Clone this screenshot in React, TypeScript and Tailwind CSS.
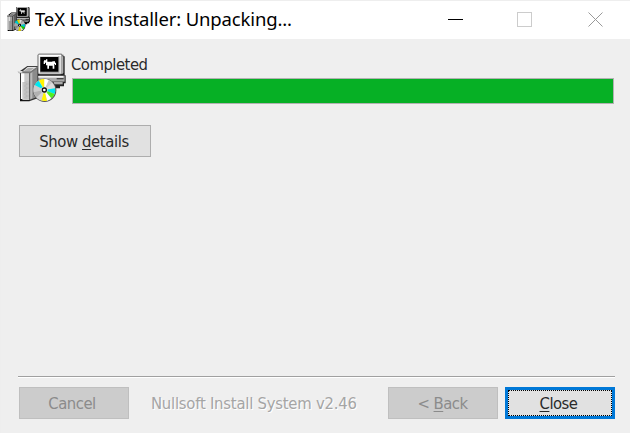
import type { ReactNode } from "react";

function InstallerIcon({ className, viewBox = "0 0 180 180" }: { className: string; viewBox?: string }) {
  return (
    <svg className={className} viewBox={viewBox} preserveAspectRatio="none" aria-hidden="true">
      {/* monitor and base */}
      <path d="M80 17h69v3h5v5h4v57h3v24h-5v9h-12v6h-21l-5-14H77V20h3z" fill="#222" />
      <path d="M79 18h70v4h4v56H79z" fill="#888" />
      <path d="M80 20h68v57H80z" fill="#dedede" />
      <path d="M80 21h67v3H83v50h-3z" fill="#fff" />
      <path d="M150 26h4v49h-4z" fill="#b0b0b0" />
      <path d="M84 72V27h54v-2h4v49H84z" fill="#a0a0a0" />
      <path d="M85 27h54v44H85z" fill="#000" />
      <path d="M96 37h6v-3h4v7h15v-1h8v4h3v7h-3v-3h-2v14h-5V53h-11v9h-5V52h-4v-8h-3v4h-4v-8h1z" fill="#fff" />
      <path d="M79 83h79v18H79z" fill="#aaa" />
      <path d="M79 84h75v5H79z" fill="#f2f2f2" />
      <path d="M134 90h21v4h-21z" fill="#444" />
      <path d="M82 79h64v4H82z" fill="#555" />
      <path d="M125 102h27v7h-27z" fill="#aaa" />
      {/* open box */}
      <path d="M24 69 46 54h31v97l-23 8H24z" fill="#333" />
      <path d="M27 72h25v84H27z" fill="#cacaca" />
      <path d="M27 73h10v29H27zM27 102h4v52h-4z" fill="#fff" />
      <path d="M54 72 75 59v88l-21 8z" fill="#8b8b8b" />
      <path d="m55 76 6-5v80l-6 3z" fill="#b9b9b9" />
      <path d="M17 70h16l15-14h29v5L55 76H21z" fill="#777" />
      <path d="M18 69h15l14-12h27L56 70H31v4H20z" fill="#e1e1e1" />
      <path d="M36 68 48 60h18L54 69z" fill="#aaa" />
      <path d="M39 103v49M43 101v51M48 101v51" stroke="#999" strokeWidth="2" strokeDasharray="2 2" />
      <path d="M24 153h7v4h22v3H24z" fill="#111" />
      {/* compact disc */}
      <circle cx="98" cy="127" r="35" fill="#555" />
      <circle cx="97" cy="126" r="33" fill="#d0d0d0" />
      <path d="M97 126 81 97q7-4 17-4z" fill="#fff400" />
      <path d="M97 126V93q7 0 13 4z" fill="#fff" />
      <path d="m97 126 14-29q6 3 9 7z" fill="#c8c8c8" />
      <path d="m97 126 23-21q7 8 9 16z" fill="#ddd" />
      <path d="m97 126 32-5q2 8-1 17z" fill="#00e8ef" />
      <path d="m97 126 31 12q-3 8-10 13z" fill="#50f020" />
      <path d="m97 126 20 25q-5 5-12 7z" fill="#fff" />
      <path d="m97 126 8 32q-8 2-17-1z" fill="#fff400" />
      <path d="m97 126-9 31q-8-3-14-8z" fill="#d4d4d4" />
      <path d="m97 126-23 22q-7-7-9-16z" fill="#b1b1b1" />
      <path d="m97 126-32 5q-1-12 3-20z" fill="#ccc" />
      <path d="m97 126-29-15q4-8 12-13z" fill="#00e8ef" />
      <circle cx="97" cy="126" r="10" fill="#ddd" />
      <circle cx="97" cy="126" r="8" fill="#111" />
      <circle cx="97" cy="126" r="4" fill="#fff" />
    </svg>
  );
}

function Label({ children, className = "" }: { children: ReactNode; className?: string }) {
  return <span className={"whitespace-nowrap " + className}>{children}</span>;
}

export default function App() {
  return (
    <main className="flex h-[433px] w-[630px] select-none flex-col overflow-hidden border-l border-t border-[#eeeeee] bg-[#efefef] font-['DejaVu_Sans_Condensed','DejaVu_Sans',sans-serif] text-[16.5px] tracking-[-0.5px] text-[#2a2a2a] [font-stretch:condensed]">
      <header className="flex h-[38px] shrink-0 items-start bg-white pl-[6px]">
        <InstallerIcon className="mt-[6px] h-6 w-[23px] shrink-0 brightness-75 contrast-150" viewBox="19 22 142 137" />
        <Label className="ml-[5px] font-['Noto_Sans',sans-serif] text-[18.5px] leading-[36px] tracking-[-0.15px] text-black [font-stretch:normal]">TeX Live installer: Unpacking...</Label>
        <nav className="ml-auto mr-[27px] flex h-[37px] items-center">
          <button aria-label="Minimize" className="h-px w-[15px] bg-black" />
          <button aria-label="Maximize" className="ml-[54px] h-[15px] w-[15px] border border-[#cccccc]" />
          <button aria-label="Close window" className="ml-[56px] h-[15px] w-[15px]">
            <svg viewBox="0 0 15 15" className="block h-full w-full"><path d="m.5.5 14 14m0-14-14 14" stroke="#999" fill="none" /></svg>
          </button>
        </nav>
      </header>

      <section className="flex h-[77px] shrink-0 pl-[11px] pt-[9px]">
        <InstallerIcon className="h-[60px] w-[60px] shrink-0" />
        <div className="-ml-px pt-[5px]">
          <Label className="block h-6 leading-6">Completed</Label>
          <div className="ml-px mt-px h-[26px] w-[542px] border border-[#b2b2b2] bg-[#06b025]" />
        </div>
      </section>

      <button className="ml-[18px] mt-[9px] flex h-8 w-[132px] shrink-0 items-center justify-center border border-[#adadad] bg-[#e1e1e1]">
        <Label className="-ml-[2px] pt-[2px] tracking-[-0.4px]">Show <u className="underline-offset-2">d</u>etails</Label>
      </button>

      <div className="ml-[17px] mt-auto h-[2px] w-[597px] border-b border-t border-b-white border-t-[#a0a0a0]" />
      <footer className="flex h-[55px] shrink-0 items-start pl-[18px] pt-[9px]">
        <button className="flex h-8 w-[110px] items-center justify-center border border-[#bfbfbf] bg-[#cccccc] text-[#8b8b8b]">
          <Label className="-ml-1 pt-[3px]">Cancel</Label>
        </button>
        <Label className="ml-[22px] w-[237px] leading-[34px] tracking-[-0.23px] text-[#a5a5a5] [text-shadow:1px_1px_0_white]">Nullsoft Install System v2.46</Label>
        <button className="flex h-8 w-[110px] items-center justify-center border border-[#bfbfbf] bg-[#cccccc] text-[#8b8b8b]">
          <Label className="-ml-px pt-[3px]">&lt; <u className="underline-offset-2">B</u>ack</Label>
        </button>
        <button className="ml-[7px] flex h-8 w-[110px] border-[3px] border-[#0078d7] bg-[#e1e1e1]">
          <span className="flex h-full w-full items-center justify-center border border-dotted border-black">
            <Label className="-ml-[3px] pt-[3px]"><u className="underline-offset-2">C</u>lose</Label>
          </span>
        </button>
      </footer>
    </main>
  );
}
